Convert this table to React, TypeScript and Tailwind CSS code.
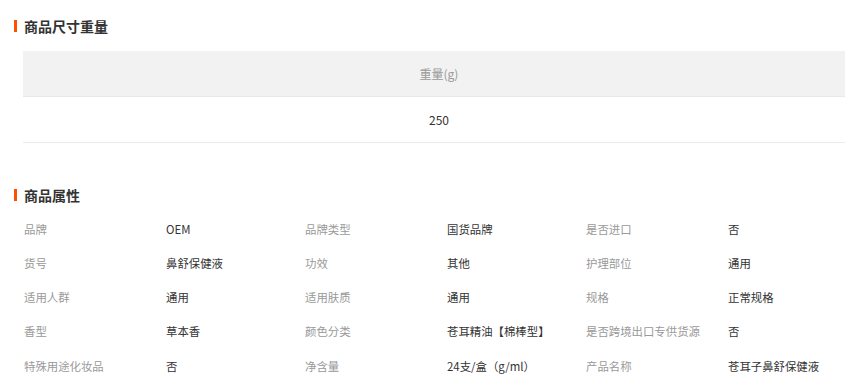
import { Fragment } from 'react';

const attrs: [string, string][][] = [
  [['品牌', 'OEM'], ['品牌类型', '国货品牌'], ['是否进口', '否']],
  [['货号', '鼻舒保健液'], ['功效', '其他'], ['护理部位', '通用']],
  [['适用人群', '通用'], ['适用肤质', '通用'], ['规格', '正常规格']],
  [['香型', '草本香'], ['颜色分类', '苍耳精油【棉棒型】'], ['是否跨境出口专供货源', '否']],
  [['特殊用途化妆品', '否'], ['净含量', '24支/盒（g/ml）'], ['产品名称', '苍耳子鼻舒保健液']],
];

function SectionTitle({ text }: { text: string }) {
  return (
    <div className="flex items-center h-[20px]">
      <span className="ml-[14px] w-[3px] h-[12px] bg-[#ff5000]" />
      <span className="ml-[7px] text-[14px] font-bold text-[#333]">{text}</span>
    </div>
  );
}

export default function App() {
  return (
    <div
      className="w-[845px] h-[385px] overflow-hidden bg-white"
      style={{ fontFamily: '"Noto Sans CJK SC", "Liberation Sans", sans-serif' }}
    >
      <div className="pt-[16px]">
        <SectionTitle text="商品尺寸重量" />
        <div className="mt-[15px] ml-[23px] w-[832px] text-[12px]">
          <div className="h-[46px] bg-[#f2f2f2] border-b border-[#e8e8e8] flex items-center justify-center text-[#999]">
            重量(g)
          </div>
          <div className="h-[46px] border-b border-[#ebebeb] flex items-center justify-center text-[#333]">
            250
          </div>
        </div>
      </div>

      <div className="mt-[42px]">
        <SectionTitle text="商品属性" />
        <div className="mt-[7px] ml-[24px] text-[11.4px]">
          {attrs.map((row, i) => (
            <div key={i} className="grid grid-cols-[142px_139px_142px_139px_142px_139px] h-[34.25px] items-center">
              {row.map(([k, v]) => (
                <Fragment key={k}>
                  <span className="text-[#999] whitespace-nowrap">{k}</span>
                  <span className="text-[#333] whitespace-nowrap">{v}</span>
                </Fragment>
              ))}
            </div>
          ))}
        </div>
      </div>
    </div>
  );
}
